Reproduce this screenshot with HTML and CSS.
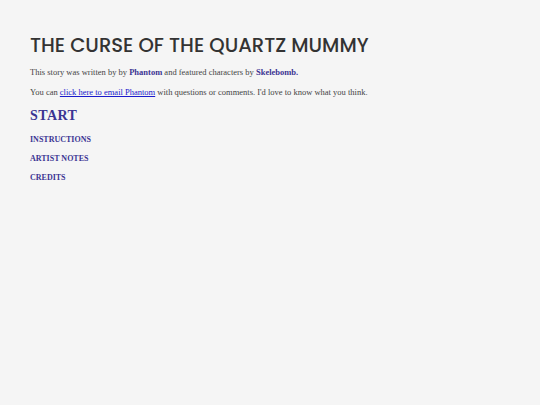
FILE: index.html
```html
<!DOCTYPE html>
<html>
<head>
<meta charset="utf-8">
<link rel="stylesheet" href="styles.css">
</head>
<body>
<div class="page">
  <h1 class="title">THE CURSE OF THE QUARTZ MUMMY</h1>
  <p class="text">This story was written by by <a class="name" href="#">Phantom</a> and featured characters by <a class="name" href="#">Skelebomb.</a></p>
  <p class="text">You can <a class="mail" href="#">click here to email Phantom</a> with questions or comments. I'd love to know what you think.</p>
  <a class="start" href="#">START</a>
  <a class="menu" href="#">INSTRUCTIONS</a>
  <a class="menu" href="#">ARTIST NOTES</a>
  <a class="menu" href="#">CREDITS</a>
</div>
</body>
</html>
```
FILE: styles.css
```css
html, body { margin: 0; padding: 0; background: #f5f5f5; }
.page {
  display: flex;
  flex-direction: column;
  align-items: flex-start;
  padding: 33px 30px;
  font-family: "Liberation Serif", serif;
  color: #444;
}
.title {
  margin: 0 0 9px;
  font-family: "Poppins", "Open Sans", "Noto Sans", sans-serif;
  font-weight: 500;
  font-size: 19.6px;
  line-height: 24px;
  color: #333;
}
.text {
  margin: 0 0 8px;
  font-size: 8.5px;
  line-height: 12px;
}
.name { color: #3b3493; font-weight: bold; text-decoration: none; }
.mail { color: #1a1acc; }
.start {
  margin: 2px 0 3px;
  font-size: 14px;
  line-height: 16px;
  font-weight: bold;
  color: #3b3493;
  text-decoration: none;
  letter-spacing: 0.4px;
}
.menu {
  margin-top: 7px;
  font-size: 8px;
  line-height: 12px;
  font-weight: bold;
  color: #3b3493;
  text-decoration: none;
}
```
